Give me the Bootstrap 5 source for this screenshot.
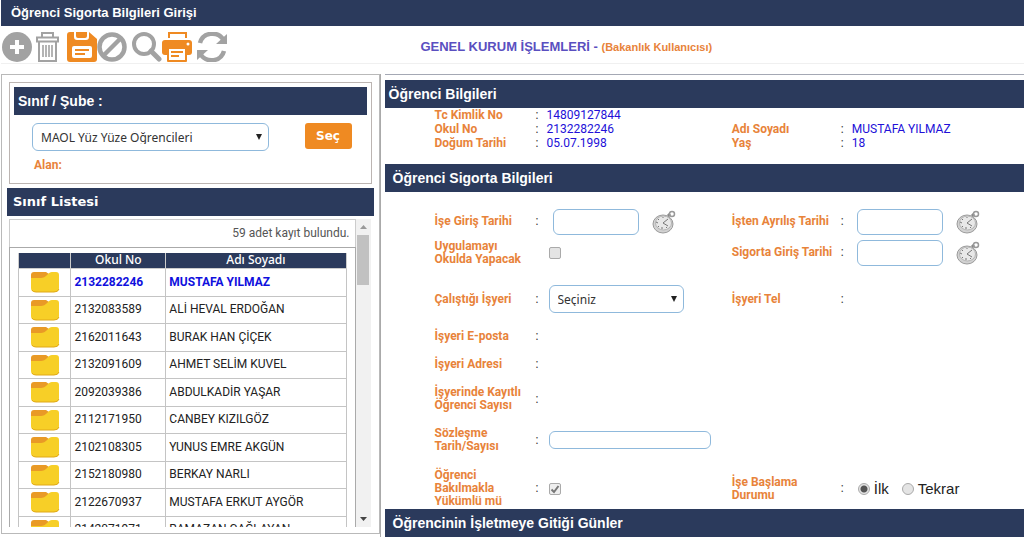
<!DOCTYPE html>
<html lang="tr">
<head>
<meta charset="utf-8">
<meta name="viewport" content="width=device-width, initial-scale=1">
<title>Öğrenci Sigorta Bilgileri Girişi</title>
<link href="https://cdn.jsdelivr.net/npm/bootstrap@5.3.0/dist/css/bootstrap.min.css" rel="stylesheet">
<style>
  :root { --navy: #2b3a5c; --orange: #ef8a22; --label: #e8833a; --edge: #b9b9b9; --field: #8fb9dc; }
  body { font-family: Roboto, "Liberation Sans", Arial, sans-serif; font-size: 12px; line-height: 13px; color: #222; background: #fff; padding-left: 1px; }
  .bar { background: var(--navy); color: #fff; font-family: "Liberation Sans", Arial, sans-serif; font-size: 14px; font-weight: 700; line-height: 28px; margin: 0; padding: 0 8px; }
  .bar-page { font-size: 13px; line-height: 26px; padding: 0 10px; }
  .bar-tight { padding: 0 4px; }
  .bar-list { font-family: "DejaVu Sans", Verdana, sans-serif; font-size: 13px; padding: 0 6px; }
  .toolbar { height: 38px; border-bottom: 1px solid #f0f0f0; }
  .tools { flex: 0 0 41%; padding-left: 1px; gap: 5px; }
  .tool { border: 0; background: none; padding: 0; width: 30px; height: 30px; color: #a2a2a2; display: block; }
  .tool svg { display: block; width: 30px; height: 30px; }
  .tool-on { color: var(--orange); }
  .title-line { font-family: "Liberation Sans", Arial, sans-serif; padding-top: 4px; }
  .title-main { font-size: 13px; color: #5a4fc0; }
  .title-user { font-size: 11px; color: var(--label); }
  .split { margin-top: 10px; }
  .side { flex: 0 0 37%; border: 1px solid var(--edge); height: 460px; padding: 7px 5px 6px; }
  .pick { border: 1px solid #bcb5b2; margin: 0 2px 4px; height: 102px; padding: 4px; }
  .pick-row { padding: 8px 15px 0 18px; }
  .field { border: 1px solid var(--field); border-radius: 6px; background: #fff; color: #333; padding: 0 8px; height: 26px; }
  .drop { appearance: none; font-family: "Noto Sans", Tahoma, sans-serif; font-size: 12px; height: 28px;
    background: #fff url("data:image/svg+xml,%3Csvg xmlns='http://www.w3.org/2000/svg' viewBox='0 0 6 6'%3E%3Cpath d='M0 0h6L3 6z' fill='%23222'/%3E%3C/svg%3E") no-repeat right 6px center / 6px 6px; }
  .drop-class { width: 237px; }
  .drop-work { width: 135px; }
  .date { width: 86px; }
  .contract { width: 162px; height: 18px; }
  .go { background: var(--orange); color: #fff; border: 0; border-radius: 3px; width: 47px; height: 26px; padding: 0; font: 700 12px/26px "DejaVu Sans", Verdana, sans-serif; }
  .lbl { color: var(--label); font-weight: 700; font-size: 12px; line-height: 13px; }
  .list { margin: 3px 3px 0 2px; height: 308px; overflow: hidden; }
  .count { border: 1px solid #ccc; border-bottom: 0; height: 28px; line-height: 26px; color: #555; padding-right: 5px; }
  .rows { border: 1px solid #aaa; padding: 5px 8px 0; }
  .students { width: 100%; border-collapse: collapse; table-layout: fixed; color: #222; }
  .students th { background: var(--navy); color: #fff; font: 500 12px/14px "Noto Sans", Tahoma, sans-serif; text-align: center; padding: 0; border: 1px solid #ccc; border-top: 0; height: 15px; }
  .students td { border: 1px solid #c4c4c4; padding: 0 3px; height: 28px; white-space: nowrap; }
  .students tbody tr:nth-child(even) td { height: 27px; }
  .students .chosen { color: #1010dd; font-weight: 700; }
  .students svg { display: block; width: 30px; height: 22px; margin: 0 auto; }
  .rail { flex: 0 0 15px; background: #f1f1f1; }
  .thumb { width: 12px; height: 50px; background: #c1c1c1; }
  .rail svg { width: 7px; height: 4px; margin: 6px 0; }
  .main { border-left: 1px solid #aaa; padding-left: 4px; }
  .main-top { border-top: 1px solid #a4a8b4; padding-top: 5px; }
  .sheet { display: grid; grid-template-columns: 101px 196fr 109px 183fr; padding-left: 50px; }
  .sheet > * { display: flex; align-items: center; }
  .facts { grid-auto-rows: 14px; height: 56px; }
  .fact { color: #2210d8; }
  .form { padding-top: 14px; grid-template-rows: 31px 31px 54px 28px 28px 42px 40px 49px; }
  .r-low { padding-top: 8px; }
  .colon { flex: 0 0 13px; color: #333; }
  .fact .colon { flex-basis: 11px; }
  .colon-wide { flex-basis: 16px; }
  .inset { margin-left: 4px; }
  .watch { border: 0; background: none; padding: 0; margin-left: 13px; width: 24px; height: 24px; }
  .watch svg { display: block; width: 24px; height: 24px; }
  .tick, .pip { appearance: none; margin: 0; width: 12px; height: 12px; border: 1px solid #aaa; background: #e4e4e4; border-radius: 2px; flex: none; }
  .tick:checked { background: #eee url("data:image/svg+xml,%3Csvg xmlns='http://www.w3.org/2000/svg' viewBox='0 0 10 10'%3E%3Cpath d='M1.5 5.5l2.5 2.5L8.500 2' fill='none' stroke='%23777' stroke-width='2'/%3E%3C/svg%3E") center / 10px 10px; }
  .pip { border-radius: 50%; }
  .pip:checked { background: radial-gradient(circle, #555 3px, #e4e4e4 4px); }
  .choice { font-family: "Liberation Sans", Arial, sans-serif; font-size: 15px; line-height: 18px; color: #222; gap: 4px; margin: 0 12px 0 1px; }
</style>
</head>
<body>
<svg class="d-none" aria-hidden="true">
  <symbol id="folder" viewBox="0 0 30 22">
    <path d="M1 4q0-3 3-3h12l3 2-3 4H1z" fill="#e99a26"/>
    <path d="M1 7h9c4 0 5-1 7-3s3-3 5-3h4q3 0 3 3v13q0 4-4 4H5q-4 0-4-4z" fill="#f7cf27"/>
    <path d="M2 19q1 2 4 2h18q4 0 5-3" fill="none" stroke="#e0a91a"/>
  </symbol>
  <symbol id="watch" viewBox="0 0 24 24">
    <ellipse cx="11" cy="14" rx="10" ry="9" fill="#d2d2d2" stroke="#9a9a9a"/>
    <ellipse cx="11.500" cy="13" rx="8" ry="7" fill="#e8e8e8" stroke="#b4b4b4"/>
    <path d="M11 13l5-4M11 13l5 3M4 12l2 1M6 17l1-1M10 19v-2M15 18l-1-1M11 7v1M6 9l1 1" stroke="#777" fill="none"/>
    <path d="M16 6l2-2" stroke="#888" stroke-width="3"/>
    <circle cx="20" cy="4" r="2.500" fill="none" stroke="#999" stroke-width="1.500"/>
  </symbol>
</svg>

<header>
  <h1 class="bar bar-page">Öğrenci Sigorta Bilgileri Girişi</h1>
  <div class="toolbar d-flex align-items-center">
    <div class="tools d-flex pt-1">
      <div class="d-flex">
        <button class="tool" type="button" aria-label="Yeni"><svg viewBox="0 0 30 30"><circle cx="15" cy="15" r="15" fill="currentColor"/><path d="M15 8v14M8 15h14" stroke="#fff" stroke-width="4"/></svg></button>
        <button class="tool" type="button" aria-label="Sil"><svg viewBox="0 0 30 30" fill="none" stroke="currentColor" stroke-width="2"><path d="M5 5.500h21v4H5zM10 5V1h11v4M7 10v19h17V10" /><path d="M11 13v12M14 13v12M17 13v12M20 13v12" stroke-width="1.600"/></svg></button>
      </div>
      <div class="d-flex">
        <button class="tool tool-on" type="button" aria-label="Kaydet"><svg viewBox="0 0 30 30"><path d="M3 0h4v5q0 3 3 3h9q3 0 3-3V0l8 7v20q0 3-3 3H3q-3 0-3-3V3q0-3 3-3z" fill="currentColor"/><path d="M9 0h11v4q0 2-2 2h-7q-2 0-2-2z" fill="currentColor"/><rect x="5" y="14" width="20" height="12" rx="2" fill="#fff"/><path d="M8 18h14M8 22h10" stroke="currentColor" stroke-width="2"/></svg></button>
        <button class="tool" type="button" aria-label="İptal"><svg viewBox="0 0 30 30" fill="none" stroke="currentColor" stroke-width="4.500"><circle cx="15" cy="15" r="12.500"/><path d="M6 24L24 6"/></svg></button>
      </div>
      <div class="d-flex">
        <button class="tool" type="button" aria-label="Ara"><svg viewBox="0 0 30 30" fill="none" stroke="currentColor"><circle cx="12" cy="12" r="10" stroke-width="4"/><path d="M19 19l8 8" stroke-width="5" stroke-linecap="round"/></svg></button>
        <button class="tool tool-on" type="button" aria-label="Yazdır"><svg viewBox="0 0 30 30"><path d="M7 6V1h17v5" fill="none" stroke="currentColor" stroke-width="2"/><rect y="8" width="30" height="15" rx="3" fill="currentColor"/><rect x="5" y="15" width="20" height="15" rx="1" fill="currentColor"/><rect x="7" y="17" width="16" height="11" fill="#fff"/><path d="M9 20h12M9 24h8" stroke="currentColor" stroke-width="2"/><circle cx="26" cy="12" r="1.500" fill="#fff"/></svg></button>
      </div>
      <button class="tool" type="button" aria-label="Yenile"><svg viewBox="0 0 30 30"><path d="M3 11C6 0 20-1 26 7M27 19C24 30 10 31 4 23" fill="none" stroke="currentColor" stroke-width="4.500"/><path d="M30 2v10H19zM0 28V18h11z" fill="currentColor"/></svg></button>
    </div>
    <div class="title-line fw-bold"><span class="title-main">GENEL KURUM İŞLEMLERİ - </span><span class="title-user">(Bakanlık Kullanıcısı)</span></div>
  </div>
</header>

<div class="split d-flex">
  <aside class="side d-flex flex-column">
    <section class="pick">
      <h2 class="bar bar-tight" id="pickHead">Sınıf / Şube :</h2>
      <div class="pick-row d-flex justify-content-between align-items-start">
        <select class="field drop drop-class" aria-labelledby="pickHead"><option>MAOL Yüz Yüze Öğrencileri</option></select>
        <button class="go" type="button">Seç</button>
      </div>
      <div class="lbl px-3 mt-2 ms-1">Alan:</div>
    </section>
    <h2 class="bar bar-list">Sınıf Listesi</h2>
    <div class="list d-flex">
      <div class="flex-grow-1">
        <div class="count text-end">59 adet kayıt bulundu.</div>
        <div class="rows">
          <table class="students">
            <colgroup><col style="width:16%"><col style="width:29%"><col></colgroup>
            <thead><tr><th></th><th>Okul No</th><th>Adı Soyadı</th></tr></thead>
            <tbody>
              <tr class="chosen"><td><svg><use href="#folder"/></svg></td><td>2132282246</td><td>MUSTAFA YILMAZ</td></tr>
              <tr><td><svg><use href="#folder"/></svg></td><td>2132083589</td><td>ALİ HEVAL ERDOĞAN</td></tr>
              <tr><td><svg><use href="#folder"/></svg></td><td>2162011643</td><td>BURAK HAN ÇİÇEK</td></tr>
              <tr><td><svg><use href="#folder"/></svg></td><td>2132091609</td><td>AHMET SELİM KUVEL</td></tr>
              <tr><td><svg><use href="#folder"/></svg></td><td>2092039386</td><td>ABDULKADİR YAŞAR</td></tr>
              <tr><td><svg><use href="#folder"/></svg></td><td>2112171950</td><td>CANBEY KIZILGÖZ</td></tr>
              <tr><td><svg><use href="#folder"/></svg></td><td>2102108305</td><td>YUNUS EMRE AKGÜN</td></tr>
              <tr><td><svg><use href="#folder"/></svg></td><td>2152180980</td><td>BERKAY NARLI</td></tr>
              <tr><td><svg><use href="#folder"/></svg></td><td>2122670937</td><td>MUSTAFA ERKUT AYGÖR</td></tr>
              <tr><td><svg><use href="#folder"/></svg></td><td>2142071971</td><td>RAMAZAN ÇAĞLAYAN</td></tr>
            </tbody>
          </table>
        </div>
      </div>
      <div class="rail d-flex flex-column align-items-center">
        <svg viewBox="0 0 7 4"><path d="M0 4h7L3.500 0z" fill="#999"/></svg>
        <div class="thumb"></div>
        <svg class="mt-auto" viewBox="0 0 7 4"><path d="M0 0h7L3.500 4z" fill="#444"/></svg>
      </div>
    </div>
  </aside>

  <main class="main flex-grow-1">
    <div class="main-top">
      <h2 class="bar bar-tight">Öğrenci Bilgileri</h2>
      <div class="sheet facts">
        <div class="lbl">Tc Kimlik No</div><div class="fact"><span class="colon">:</span>14809127844</div><div></div><div></div>
        <div class="lbl">Okul No</div><div class="fact"><span class="colon">:</span>2132282246</div>
        <div class="lbl">Adı Soyadı</div><div class="fact"><span class="colon">:</span>MUSTAFA YILMAZ</div>
        <div class="lbl">Doğum Tarihi</div><div class="fact"><span class="colon">:</span>05.07.1998</div>
        <div class="lbl">Yaş</div><div class="fact"><span class="colon">:</span>18</div>
      </div>
      <h2 class="bar">Öğrenci Sigorta Bilgileri</h2>
      <form class="sheet form">
        <label class="lbl" for="start">İşe Giriş Tarihi</label>
        <div><span class="colon">:</span><input class="field date inset" id="start" type="text"><button class="watch" type="button" aria-label="Tarih seç"><svg><use href="#watch"/></svg></button></div>
        <label class="lbl" for="end">İşten Ayrılış Tarihi</label>
        <div><span class="colon colon-wide">:</span><input class="field date" id="end" type="text"><button class="watch" type="button" aria-label="Tarih seç"><svg><use href="#watch"/></svg></button></div>

        <label class="lbl" for="school">Uygulamayı<br>Okulda Yapacak</label>
        <div><span class="colon"></span><input class="tick" id="school" type="checkbox"></div>
        <label class="lbl" for="ins">Sigorta Giriş Tarihi</label>
        <div><span class="colon colon-wide">:</span><input class="field date" id="ins" type="text"><button class="watch" type="button" aria-label="Tarih seç"><svg><use href="#watch"/></svg></button></div>

        <label class="lbl r-low" for="work">Çalıştığı İşyeri</label>
        <div class="r-low"><span class="colon">:</span><select class="field drop drop-work" id="work"><option>Seçiniz</option></select></div>
        <div class="lbl r-low">İşyeri Tel</div>
        <div class="r-low"><span class="colon">:</span></div>

        <div class="lbl">İşyeri E-posta</div><div><span class="colon">:</span></div><div></div><div></div>
        <div class="lbl">İşyeri Adresi</div><div><span class="colon">:</span></div><div></div><div></div>
        <div class="lbl">İşyerinde Kayıtlı<br>Öğrenci Sayısı</div><div><span class="colon">:</span></div><div></div><div></div>
        <label class="lbl" for="contract">Sözleşme<br>Tarih/Sayısı</label><div><span class="colon">:</span><input class="field contract" id="contract" type="text"></div><div></div><div></div>

        <label class="lbl r-low" for="care">Öğrenci<br>Bakılmakla<br>Yükümlü mü</label>
        <div class="r-low"><span class="colon">:</span><input class="tick" id="care" type="checkbox" checked disabled></div>
        <div class="lbl r-low">İşe Başlama<br>Durumu</div>
        <div class="r-low"><span class="colon colon-wide">:</span>
          <label class="choice d-flex align-items-center"><input class="pip" type="radio" name="state" checked>İlk</label>
          <label class="choice d-flex align-items-center"><input class="pip" type="radio" name="state">Tekrar</label>
        </div>
      </form>
      <h2 class="bar">Öğrencinin İşletmeye Gitiği Günler</h2>
    </div>
  </main>
</div>
<script src="https://cdn.jsdelivr.net/npm/bootstrap@5.3.0/dist/js/bootstrap.bundle.min.js"></script>
</body>
</html>
